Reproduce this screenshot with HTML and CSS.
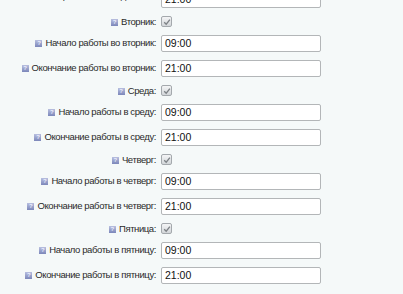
FILE: index.html
```html
<!DOCTYPE html>
<html lang="ru">
<head>
<meta charset="utf-8">
<title>Режим работы</title>
<link rel="stylesheet" href="styles.css">
</head>
<body>
<div class="form">
  <div class="row row-input row-cut">
    <div class="label"><span class="hint">?</span>Окончание работы в понедельник:</div>
    <div class="ctl"><span class="field">21:00</span></div>
  </div>

  <div class="row row-check">
    <div class="label"><span class="hint">?</span>Вторник:</div>
    <div class="ctl"><span class="check"><svg viewBox="0 0 10 10" width="10" height="10"><path d="M2.2 5.2 L4.2 7.2 L7.9 2.6" fill="none" stroke="#7d8286" stroke-width="1.3"/></svg></span></div>
  </div>
  <div class="row row-input">
    <div class="label"><span class="hint">?</span>Начало работы во вторник:</div>
    <div class="ctl"><span class="field">09:00</span></div>
  </div>
  <div class="row row-input">
    <div class="label"><span class="hint">?</span>Окончание работы во вторник:</div>
    <div class="ctl"><span class="field">21:00</span></div>
  </div>

  <div class="row row-check">
    <div class="label"><span class="hint">?</span>Среда:</div>
    <div class="ctl"><span class="check"><svg viewBox="0 0 10 10" width="10" height="10"><path d="M2.2 5.2 L4.2 7.2 L7.9 2.6" fill="none" stroke="#7d8286" stroke-width="1.3"/></svg></span></div>
  </div>
  <div class="row row-input">
    <div class="label"><span class="hint">?</span>Начало работы в среду:</div>
    <div class="ctl"><span class="field">09:00</span></div>
  </div>
  <div class="row row-input">
    <div class="label"><span class="hint">?</span>Окончание работы в среду:</div>
    <div class="ctl"><span class="field">21:00</span></div>
  </div>

  <div class="row row-check">
    <div class="label"><span class="hint">?</span>Четверг:</div>
    <div class="ctl"><span class="check"><svg viewBox="0 0 10 10" width="10" height="10"><path d="M2.2 5.2 L4.2 7.2 L7.9 2.6" fill="none" stroke="#7d8286" stroke-width="1.3"/></svg></span></div>
  </div>
  <div class="row row-input">
    <div class="label"><span class="hint">?</span>Начало работы в четверг:</div>
    <div class="ctl"><span class="field">09:00</span></div>
  </div>
  <div class="row row-input">
    <div class="label"><span class="hint">?</span>Окончание работы в четверг:</div>
    <div class="ctl"><span class="field">21:00</span></div>
  </div>

  <div class="row row-check">
    <div class="label"><span class="hint">?</span>Пятница:</div>
    <div class="ctl"><span class="check"><svg viewBox="0 0 10 10" width="10" height="10"><path d="M2.2 5.2 L4.2 7.2 L7.9 2.6" fill="none" stroke="#7d8286" stroke-width="1.3"/></svg></span></div>
  </div>
  <div class="row row-input">
    <div class="label"><span class="hint">?</span>Начало работы в пятницу:</div>
    <div class="ctl"><span class="field">09:00</span></div>
  </div>
  <div class="row row-input">
    <div class="label"><span class="hint">?</span>Окончание работы в пятницу:</div>
    <div class="ctl"><span class="field">21:00</span></div>
  </div>
</div>
</body>
</html>
```

FILE: styles.css
```css
html, body {
  margin: 0;
  padding: 0;
  background: #f5f9f9;
  overflow: hidden;
}
body {
  font-family: "Liberation Sans", Arial, sans-serif;
  font-size: 9.5px;
  color: #2a2a2a;
}
.form {
  margin-top: -13px;
  display: flex;
  flex-direction: column;
}
.row {
  display: flex;
  align-items: flex-start;
  gap: 5px;
}
.label {
  width: 156px;
  flex: none;
  display: flex;
  justify-content: flex-end;
  align-items: center;
  white-space: nowrap;
  line-height: 12px;
  letter-spacing: -0.4px;
}
.row-input {
  padding: 4px 0;
  height: 17px;
}
.row-input .label {
  padding-top: 2px;
}
.row-cut .label {
  padding-top: 0;
  margin-top: -1px;
}
.row-check {
  padding: 4px 0;
  height: 11px;
}
.hint {
  display: inline-block;
  width: 7px;
  height: 7px;
  margin-right: 3px;
  background: linear-gradient(#b8bfdf, #7c87ba);
  color: #eef0ff;
  font-size: 6px;
  line-height: 7px;
  letter-spacing: 0;
  text-align: center;
  font-weight: bold;
  flex: none;
}
.check {
  display: block;
  width: 11px;
  height: 11px;
  box-sizing: border-box;
  border: 1px solid #a4a9ad;
  border-radius: 2px;
  background: linear-gradient(#f4f5f6, #d2d6d9);
  position: relative;
}
.check svg {
  position: absolute;
  left: -0.5px;
  top: -0.5px;
}
.field {
  display: block;
  box-sizing: border-box;
  width: 160px;
  height: 17px;
  border: 1px solid #b3b6b8;
  border-radius: 2px;
  background: #fff;
  padding: 0 3px;
  line-height: 15px;
  font-size: 10.5px;
  color: #111;
}
```
